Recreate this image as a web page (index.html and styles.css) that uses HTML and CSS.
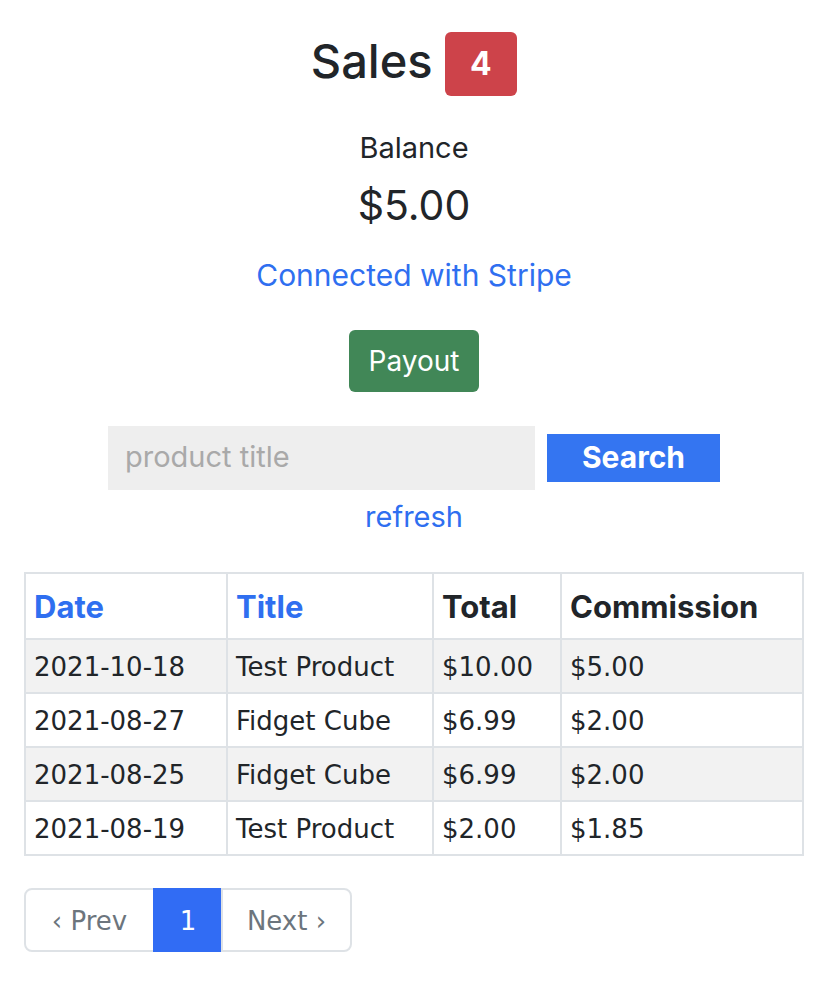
FILE: index.html
```html
<!DOCTYPE html>
<html lang="en">
<head>
<meta charset="utf-8">
<title>Sales</title>
<link rel="stylesheet" href="styles.css">
</head>
<body>
<main class="page">
  <div class="title-row">
    <h1 class="title">Sales</h1>
    <span class="badge">4</span>
  </div>
  <div class="balance-label">Balance</div>
  <div class="balance-amount">$5.00</div>
  <a class="stripe-link" href="#">Connected with Stripe</a>
  <button class="btn-payout" type="button">Payout</button>
  <form class="search-row">
    <input class="search-input" type="text" placeholder="product title">
    <button class="btn-search" type="button">Search</button>
  </form>
  <a class="refresh-link" href="#">refresh</a>
  <table class="sales-table">
    <colgroup>
      <col class="col-date">
      <col class="col-title">
      <col class="col-total">
      <col class="col-comm">
    </colgroup>
    <thead>
      <tr>
        <th><a class="sort-link" href="#">Date</a></th>
        <th><a class="sort-link" href="#">Title</a></th>
        <th>Total</th>
        <th>Commission</th>
      </tr>
    </thead>
    <tbody>
      <tr class="striped"><td>2021-10-18</td><td>Test Product</td><td>$10.00</td><td>$5.00</td></tr>
      <tr><td>2021-08-27</td><td>Fidget Cube</td><td>$6.99</td><td>$2.00</td></tr>
      <tr class="striped"><td>2021-08-25</td><td>Fidget Cube</td><td>$6.99</td><td>$2.00</td></tr>
      <tr><td>2021-08-19</td><td>Test Product</td><td>$2.00</td><td>$1.85</td></tr>
    </tbody>
  </table>
  <nav class="pager">
    <a class="pager-item pager-prev" href="#">&lsaquo; Prev</a>
    <a class="pager-item pager-active" href="#">1</a>
    <a class="pager-item pager-next" href="#">Next &rsaquo;</a>
  </nav>
</main>
</body>
</html>
```

FILE: styles.css
```css
html, body {
  margin: 0;
  padding: 0;
  background: #ffffff;
}

.page {
  display: flex;
  flex-direction: column;
  align-items: center;
  padding-top: 32px;
  font-family: Inter, "Liberation Sans", Arial, sans-serif;
  color: #212529;
}

.title-row {
  display: flex;
  align-items: flex-start;
  gap: 12px;
  height: 64px;
}

.title {
  margin: 5px 0 0;
  font-size: 47px;
  line-height: 1;
  font-weight: 500;
}

.badge {
  display: block;
  padding: 16px 25.5px;
  font-size: 32px;
  line-height: 1;
  font-weight: 700;
  color: #ffffff;
  background: #cd434a;
  border-radius: 6px;
}

.balance-label {
  margin-top: 37px;
  font-size: 29px;
  line-height: 1;
}

.balance-amount {
  margin-top: 23px;
  font-size: 41px;
  line-height: 1;
}

.stripe-link {
  margin-top: 34px;
  font-size: 30px;
  line-height: 1;
  color: #2f6ff0;
  text-decoration: none;
}

.btn-payout {
  margin-top: 40px;
  width: 130px;
  height: 62px;
  padding: 0;
  border: none;
  border-radius: 6px;
  background: #418757;
  color: #ffffff;
  font-family: inherit;
  font-size: 28px;
}

.search-row {
  margin: 34px 0 0;
  display: flex;
  align-items: center;
  gap: 12px;
}

.search-input {
  box-sizing: border-box;
  width: 427px;
  height: 64px;
  padding: 0 17px 4px;
  border: none;
  outline: none;
  background: #eeeeee;
  font-family: inherit;
  font-size: 29px;
  color: #212529;
}

.search-input::placeholder {
  color: #a9a9a9;
}

.btn-search {
  width: 173px;
  height: 48px;
  padding: 0 0 2px;
  border: none;
  border-radius: 0;
  background: #3475f1;
  color: #ffffff;
  font-family: inherit;
  font-size: 30px;
  font-weight: 700;
}

.refresh-link {
  margin-top: 12px;
  font-size: 29px;
  line-height: 1;
  color: #2f6ff0;
  text-decoration: none;
}

.sales-table {
  align-self: flex-start;
  margin: 41px 0 0 24px;
  width: 780px;
  table-layout: fixed;
  border-collapse: separate;
  border-spacing: 0;
  border-top: 2px solid #dee2e6;
  border-left: 2px solid #dee2e6;
}

.col-date { width: 202px; }
.col-title { width: 206px; }
.col-total { width: 128px; }
.col-comm { width: 242px; }

.sales-table th,
.sales-table td {
  padding: 0 8px;
  text-align: left;
  border-right: 2px solid #dee2e6;
  border-bottom: 2px solid #dee2e6;
  white-space: nowrap;
}

.sales-table th {
  padding-top: 2px;
  font-family: Inter, "Liberation Sans", Arial, sans-serif;
  font-size: 31px;
  font-weight: 700;
  line-height: 62px;
  color: #212529;
}

.sort-link {
  color: #2f6ff0;
  text-decoration: none;
}

.sales-table td {
  padding-top: 2px;
  font-family: "DejaVu Sans", Verdana, sans-serif;
  font-size: 26px;
  line-height: 50px;
  color: #212529;
}

.sales-table .striped td {
  background: #f2f2f2;
}

.pager {
  align-self: flex-start;
  margin: 32px 0 0 24px;
  display: flex;
}

.pager-item {
  box-sizing: border-box;
  height: 64px;
  padding-top: 2px;
  display: flex;
  align-items: center;
  justify-content: center;
  border: 2px solid #dee2e6;
  font-family: "DejaVu Sans", Verdana, sans-serif;
  font-size: 26px;
  color: #6c757d;
  text-decoration: none;
}

.pager-item + .pager-item {
  margin-left: -2px;
}

.pager-prev {
  width: 131px;
  border-radius: 8px 0 0 8px;
}

.pager-active {
  width: 70px;
  background: #316cf4;
  border-color: #316cf4;
  color: #ffffff;
}

.pager-next {
  width: 131px;
  border-radius: 0 8px 8px 0;
}
```
